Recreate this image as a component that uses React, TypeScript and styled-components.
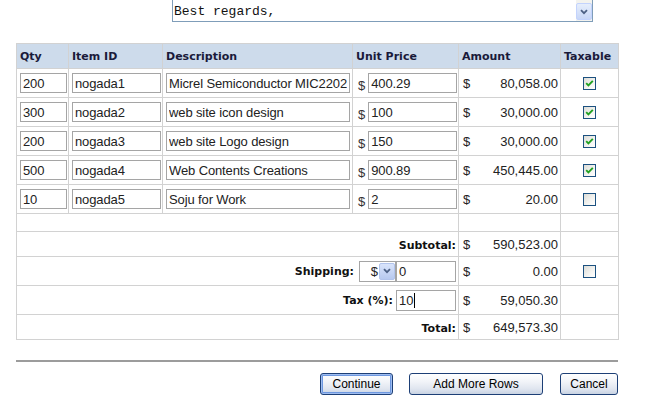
import React from "react";
import styled, { createGlobalStyle, css } from "styled-components";

const GlobalStyle = createGlobalStyle`
  html, body { margin: 0; padding: 0; background: #ffffff; }
  body { font-family: "Liberation Sans", Arial, sans-serif; }
`;

const Page = styled.div`
  width: 646px;
  height: 405px;
  overflow: hidden;
`;

const MessageBox = styled.div`
  margin-left: 172px;
  width: 421px;
  height: 22px;
  box-sizing: border-box;
  border: 1px solid #7f9db9;
  border-top: none;
  display: flex;
  background: #fff;
`;

const MessageText = styled.div`
  flex: 1;
  font-family: "Liberation Mono", "Courier New", monospace;
  font-size: 13px;
  line-height: 16px;
  padding: 4px 0 0 1px;
  color: #111;
  white-space: pre;
`;

const ScrollBar = styled.div`
  width: 16px;
  background: #f3f3ef;
  display: flex;
  flex-direction: column;
  justify-content: flex-end;
  padding-bottom: 1px;
  box-sizing: border-box;
`;

const ScrollArrow = styled.div`
  height: 17px;
  box-sizing: border-box;
  border: 1px solid #c3d3fd;
  border-radius: 2px;
  background: linear-gradient(180deg, #e6eefc 0%, #c8d7f7 100%);
  display: flex;
  align-items: center;
  justify-content: center;
`;

const TableWrap = styled.div`
  margin-top: 21px;
  padding-left: 16px;
`;

const ItemTable = styled.table`
  width: 602px;
  table-layout: fixed;
  border-collapse: collapse;
  border: 1px solid #a6a6a6;
`;

const HeadCell = styled.th`
  background: #cddbeb;
  height: 24px;
  padding: 0 0 0 3px;
  text-align: left;
  font-family: "DejaVu Sans", Verdana, sans-serif;
  font-weight: bold;
  font-size: 11px;
  color: #1a1a3a;
  border: 1px solid #d2d2d2;
  white-space: nowrap;
  overflow: hidden;
`;

const Cell = styled.td<{ $h?: number; $align?: string }>`
  height: ${(p) => p.$h ?? 28}px;
  padding: 0 2px 0 3px;
  border: 1px solid #d2d2d2;
  vertical-align: middle;
  text-align: ${(p) => p.$align ?? "left"};
  font-size: 13px;
  color: #222;
  white-space: nowrap;
`;

const TextInput = styled.input<{ $w: number; $h?: number }>`
  width: ${(p) => p.$w}px;
  height: ${(p) => p.$h ?? 20}px;
  box-sizing: border-box;
  border: 1px solid #a5a5a5;
  padding: 0 2px;
  margin: 0;
  font-family: "Liberation Sans", Arial, sans-serif;
  font-size: 13px;
  letter-spacing: -0.12px;
  color: #222;
  background: #fff;
  vertical-align: middle;
  outline: none;
`;

const PriceWrap = styled.div`
  display: flex;
  align-items: center;
  padding-left: 2px;
`;

const Dollar = styled.span<{ $gap?: number }>`
  font-size: 13px;
  color: #333;
  margin-right: ${(p) => p.$gap ?? 3}px;
  position: relative;
  top: 2px;
`;

const AmountWrap = styled.div`
  display: flex;
  justify-content: space-between;
  align-items: center;
  padding: 0 0 0 1px;
  color: #222;
`;

const CenterCell = styled.div`
  display: flex;
  justify-content: center;
  align-items: center;
  padding-right: 2px;
`;

const Box = styled.span`
  width: 13px;
  height: 13px;
  box-sizing: border-box;
  border: 1px solid #1c5180;
  background: linear-gradient(135deg, #dcdcd7 0%, #f4f4f1 60%, #ffffff 100%);
  display: inline-flex;
  align-items: center;
  justify-content: center;
`;

const SumLabel = styled.span`
  font-family: "DejaVu Sans", Verdana, sans-serif;
  font-weight: bold;
  font-size: 11px;
  color: #111;
  flex-shrink: 0;
`;

const ControlRow = styled.div`
  display: flex;
  justify-content: flex-end;
  align-items: center;
`;

const LabelGap = styled.span<{ $w: number }>`
  display: inline-block;
  flex-shrink: 0;
  width: ${(p) => p.$w}px;
`;

const SelectBox = styled.div`
  flex-shrink: 0;
  width: 37px;
  height: 21px;
  box-sizing: border-box;
  border: 1px solid #a5a5a5;
  display: flex;
  align-items: stretch;
  background: #fff;
`;

const SelectValue = styled.span`
  flex: 1;
  font-size: 13px;
  color: #222;
  padding-left: 3px;
  line-height: 19px;
`;

const SelectArrow = styled.span`
  flex-shrink: 0;
  width: 16px;
  margin: 1px 0 1px 1px;
  box-sizing: border-box;
  border: 1px solid #b2c4ec;
  border-radius: 2px;
  background: linear-gradient(180deg, #d9e4fb 0%, #b7c9ef 100%);
  display: flex;
  align-items: center;
  justify-content: center;
`;

const FakeInput = styled.div<{ $w: number }>`
  flex-shrink: 0;
  width: ${(p) => p.$w}px;
  height: 21px;
  box-sizing: border-box;
  border: 1px solid #a5a5a5;
  padding: 0 2px;
  font-size: 13px;
  line-height: 19px;
  color: #222;
  text-align: left;
  background: #fff;
`;

const Caret = styled.span`
  display: inline-block;
  width: 1px;
  height: 15px;
  background: #000;
  vertical-align: -3px;
  margin-left: 1px;
`;

const Divider = styled.div`
  margin: 20px 0 0 16px;
  width: 602px;
  height: 2px;
  background: #9c9c9c;
`;

const ButtonRow = styled.div`
  width: 602px;
  margin: 11px 0 0 16px;
  display: flex;
  justify-content: flex-end;
`;

const Button = styled.button<{ $w: number; $gap?: number; $default?: boolean }>`
  width: ${(p) => p.$w}px;
  height: 22px;
  margin: 0 0 0 ${(p) => p.$gap ?? 0}px;
  box-sizing: border-box;
  border: 1px solid #1d3f76;
  border-radius: 3px;
  background: linear-gradient(180deg, #ffffff 0%, #f1f3f8 40%, #dfe5ef 75%, #c9d3e3 100%);
  font-family: "Liberation Sans", Arial, sans-serif;
  font-size: 12px;
  color: #000;
  padding: 0;
  ${(p) =>
    p.$default &&
    css`
      box-shadow: inset 0 0 0 1px #9fbdf0, inset 0 0 0 2px #6e98e0;
    `}
`;

const Chevron = ({ color = "#4d6185" }: { color?: string }) => (
  <svg width="8" height="6" viewBox="0 0 8 6">
    <path d="M1 1.2 L4 4.2 L7 1.2" fill="none" stroke={color} strokeWidth="1.8" />
  </svg>
);

const Checkbox = ({ checked }: { checked: boolean }) => (
  <Box>
    {checked && (
      <svg width="9" height="9" viewBox="0 0 9 9">
        <path d="M1.2 4.2 L3.4 6.4 L7.8 1.8" fill="none" stroke="#21a121" strokeWidth="1.9" />
      </svg>
    )}
  </Box>
);

const items = [
  { qty: "200", id: "nogada1", desc: "Micrel Semiconductor MIC2202", price: "400.29", amount: "80,058.00", tax: true },
  { qty: "300", id: "nogada2", desc: "web site icon design", price: "100", amount: "30,000.00", tax: true },
  { qty: "200", id: "nogada3", desc: "web site Logo design", price: "150", amount: "30,000.00", tax: true },
  { qty: "500", id: "nogada4", desc: "Web Contents Creations", price: "900.89", amount: "450,445.00", tax: true },
  { qty: "10", id: "nogada5", desc: "Soju for Work", price: "2", amount: "20.00", tax: false },
];

export default function App() {
  return (
    <Page>
      <GlobalStyle />
      <MessageBox>
        <MessageText>Best regards,</MessageText>
        <ScrollBar>
          <ScrollArrow>
            <Chevron />
          </ScrollArrow>
        </ScrollBar>
      </MessageBox>

      <TableWrap>
        <ItemTable>
          <colgroup>
            <col style={{ width: 52 }} />
            <col style={{ width: 94 }} />
            <col style={{ width: 190 }} />
            <col style={{ width: 106 }} />
            <col style={{ width: 102 }} />
            <col style={{ width: 58 }} />
          </colgroup>
          <thead>
            <tr>
              <HeadCell>Qty</HeadCell>
              <HeadCell>Item ID</HeadCell>
              <HeadCell>Description</HeadCell>
              <HeadCell>Unit Price</HeadCell>
              <HeadCell>Amount</HeadCell>
              <HeadCell>Taxable</HeadCell>
            </tr>
          </thead>
          <tbody>
            {items.map((it) => (
              <tr key={it.id}>
                <Cell>
                  <TextInput $w={47} value={it.qty} readOnly />
                </Cell>
                <Cell>
                  <TextInput $w={89} value={it.id} readOnly />
                </Cell>
                <Cell>
                  <TextInput $w={184} value={it.desc} readOnly />
                </Cell>
                <Cell>
                  <PriceWrap>
                    <Dollar>$</Dollar>
                    <TextInput $w={89} value={it.price} readOnly />
                  </PriceWrap>
                </Cell>
                <Cell>
                  <AmountWrap>
                    <span>$</span>
                    <span>{it.amount}</span>
                  </AmountWrap>
                </Cell>
                <Cell>
                  <CenterCell>
                    <Checkbox checked={it.tax} />
                  </CenterCell>
                </Cell>
              </tr>
            ))}
            <tr>
              <Cell colSpan={4} $h={17} />
              <Cell $h={17} />
              <Cell $h={17} />
            </tr>
            <tr>
              <Cell colSpan={4} $h={24} $align="right">
                <SumLabel>Subtotal:</SumLabel>
              </Cell>
              <Cell $h={24}>
                <AmountWrap>
                  <span>$</span>
                  <span>590,523.00</span>
                </AmountWrap>
              </Cell>
              <Cell $h={24} />
            </tr>
            <tr>
              <Cell colSpan={4} $align="right">
                <ControlRow>
                  <SumLabel>Shipping:</SumLabel>
                  <LabelGap $w={5} />
                  <SelectBox>
                    <SelectValue>$</SelectValue>
                    <SelectArrow>
                      <Chevron />
                    </SelectArrow>
                  </SelectBox>
                  <FakeInput $w={60}>0</FakeInput>
                </ControlRow>
              </Cell>
              <Cell>
                <AmountWrap>
                  <span>$</span>
                  <span>0.00</span>
                </AmountWrap>
              </Cell>
              <Cell>
                <CenterCell>
                  <Checkbox checked={false} />
                </CenterCell>
              </Cell>
            </tr>
            <tr>
              <Cell colSpan={4} $align="right">
                <ControlRow>
                  <SumLabel>Tax (%):</SumLabel>
                  <LabelGap $w={3} />
                  <FakeInput $w={60}>
                    10
                    <Caret />
                  </FakeInput>
                </ControlRow>
              </Cell>
              <Cell>
                <AmountWrap>
                  <span>$</span>
                  <span>59,050.30</span>
                </AmountWrap>
              </Cell>
              <Cell />
            </tr>
            <tr>
              <Cell colSpan={4} $h={24} $align="right">
                <SumLabel>Total:</SumLabel>
              </Cell>
              <Cell $h={24}>
                <AmountWrap>
                  <span>$</span>
                  <span>649,573.30</span>
                </AmountWrap>
              </Cell>
              <Cell $h={24} />
            </tr>
          </tbody>
        </ItemTable>
      </TableWrap>

      <Divider />

      <ButtonRow>
        <Button $w={73} $default>
          Continue
        </Button>
        <Button $w={134} $gap={16}>
          Add More Rows
        </Button>
        <Button $w={58} $gap={17}>
          Cancel
        </Button>
      </ButtonRow>
    </Page>
  );
}
